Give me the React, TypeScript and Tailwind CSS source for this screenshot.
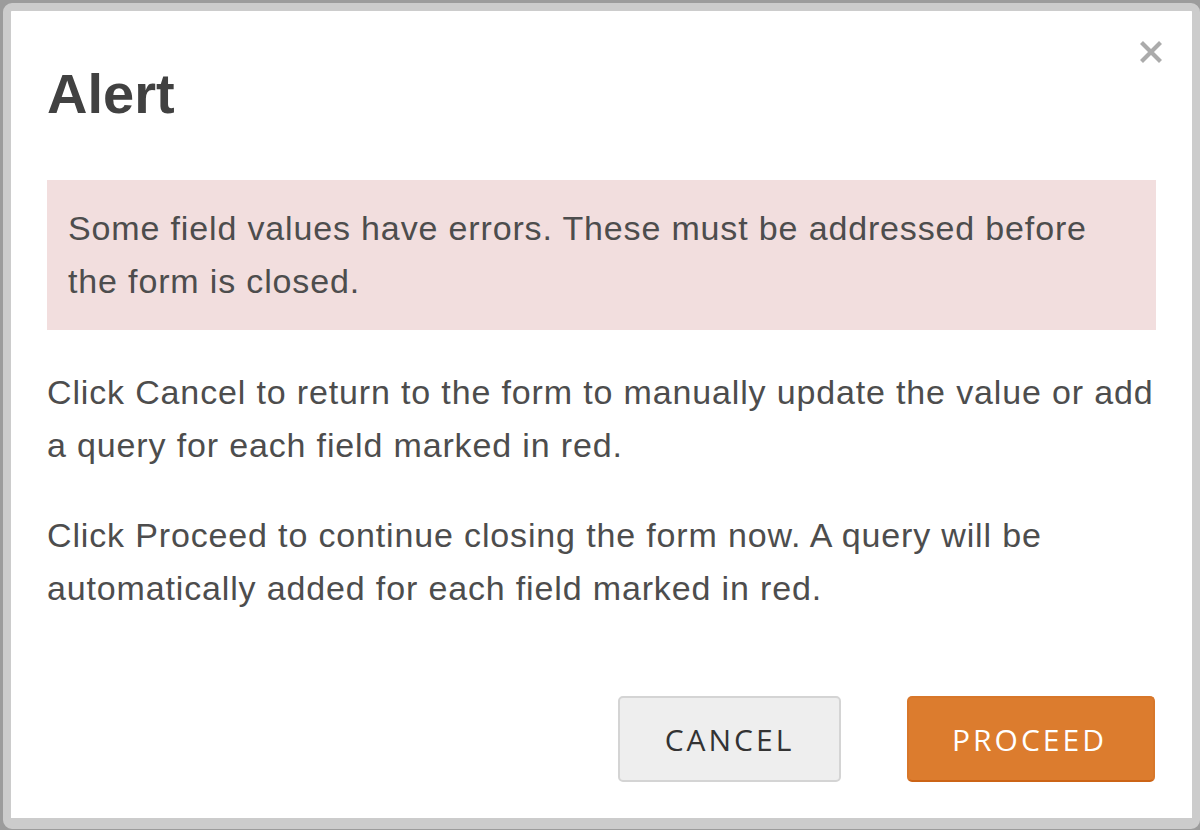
import React from "react";

export default function App() {
  return (
    <div className="h-[830px] w-[1200px] overflow-hidden bg-[#9c9c9c] pl-[3px] pt-[3px]">
      <div className="relative h-[826px] w-[1197px] rounded-[9px] border-[8px] border-b-[11px] border-[#cccccc] bg-white">
        <div className="flex h-full flex-col rounded-[2px] bg-white px-[36px] pt-[55px] pb-[36px] font-['Liberation_Sans',Arial,sans-serif] text-[#4d4d4d]">
          <button className="absolute right-[29px] top-[29px] flex h-[24px] w-[24px] items-center justify-center">
            <svg width="24" height="24" viewBox="0 0 24 24">
              <path d="M2.5 2.5 L21.5 21.5 M21.5 2.5 L2.5 21.5" stroke="#ababab" strokeWidth="4.2" strokeLinecap="butt" />
            </svg>
          </button>
          <h1 className="text-[56px] font-bold leading-[56px] text-[#414141]">Alert</h1>
          <div className="mt-[58px] bg-[#f2dede] px-[21px] py-[22px]">
            <p className="mr-[-6px] text-[34px] leading-[53px] tracking-[0.85px]">
              Some field values have errors. These must be addressed before the form is closed.
            </p>
          </div>
          <p className="mt-[36px] mr-[-12px] text-[34px] leading-[53px] tracking-[0.85px]">
            Click Cancel to return to the form to manually update the value or add a query for each field marked in red.
          </p>
          <p className="mt-[37px] mr-[-12px] text-[34px] leading-[53px] tracking-[0.85px]">
            Click Proceed to continue closing the form now. A query will be automatically added for each field marked in red.
          </p>
          <div className="mt-auto flex justify-end gap-[66px] pr-px font-['Open_Sans',sans-serif] text-[30px] tracking-[3px]">
            <button className="flex h-[86px] w-[223px] items-center justify-center rounded-[5px] border-2 border-[#d4d4d4] bg-[#eeeeee] text-[#333333]">
              CANCEL
            </button>
            <button className="flex h-[86px] w-[248px] items-center justify-center rounded-[5px] border-2 border-[#d8772a] border-b-[#cc6416] bg-[#dc7c2e] pr-[3px] text-white">
              PROCEED
            </button>
          </div>
        </div>
      </div>
    </div>
  );
}
